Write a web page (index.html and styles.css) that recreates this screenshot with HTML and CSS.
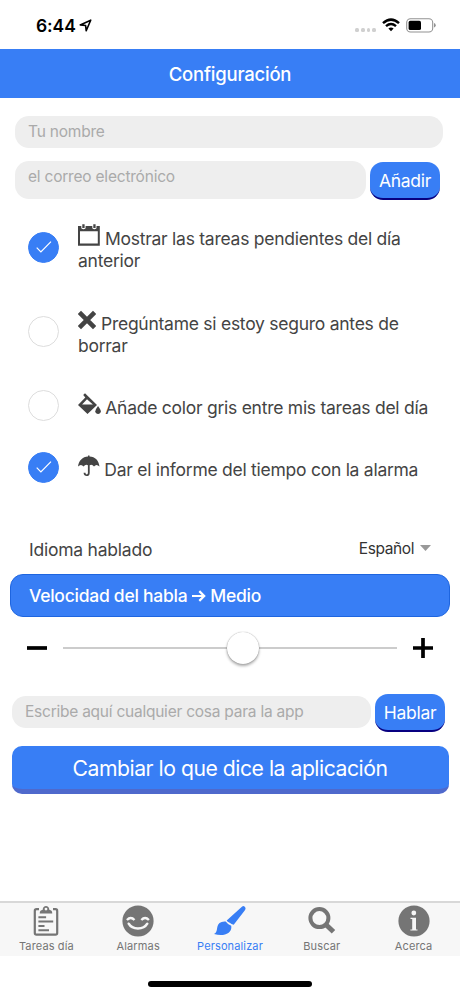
FILE: index.html
```html
<!DOCTYPE html>
<html lang="es">
<head>
<meta charset="utf-8">
<meta name="viewport" content="width=device-width, initial-scale=1">
<title>Configuración</title>
<link rel="stylesheet" href="styles.css">
</head>
<body>
<div class="status">
  <span class="time">6:44</span>
  <svg class="location" width="13" height="13" viewBox="0 0 13 13"><path d="M1.2 5.9 11.7 1.2 7.2 11.7 6.6 6.5Z" fill="none" stroke="#000" stroke-width="1.6" stroke-linejoin="round"/></svg>
  <span class="signal"><i></i><i></i><i></i><i></i></span>
  <svg class="wifi" width="18" height="14" viewBox="0 0 18 14"><g fill="none" stroke="#000" stroke-width="2.5"><path d="M1 5.1Q9-1.9 17 5.1"/><path d="M4 8.1Q9 3.9 14 8.1"/></g><path d="M6.4 10.5Q9 8.5 11.6 10.5L9 13.2Z"/></svg>
  <svg class="battery" width="30" height="15" viewBox="0 0 30 15"><rect x=".7" y=".7" width="26" height="13.3" rx="3.8" fill="#fff" stroke="#929292" stroke-width="1.1"/><rect x="2.6" y="2.7" width="12.4" height="9.4" rx="1.7"/><path d="M28 5v4.6Q29.7 9 29.7 7.3T28 5Z" fill="#929292"/></svg>
</div>
<header class="header"><h1>Configuración</h1></header>
<main class="content">
  <div class="field name">Tu nombre</div>
  <div class="field-row mail-row">
    <div class="field mail">el correo electrónico</div>
    <button class="button">Añadir</button>
  </div>
  <div class="options">
    <div class="option two-line">
      <span class="check checked"><svg width="18" height="14" viewBox="0 0 18 14"><path d="M1.7 7.7 5.9 12 16 1.6" fill="none" stroke="#fff" stroke-width="1.2"/></svg></span>
      <p class="label first"><svg class="icon" width="22" height="22" viewBox="0 0 22 22"><path fill="#444" fill-rule="evenodd" d="M0 2H3.3V4.2Q5.5 6.2 7.6 4.2V2H14.3V4.2Q16.4 6.2 18.5 4.2V2H21.8V21.7H0ZM2 7.2V19.6H19.8V7.2Z"/><path fill="#444" d="M4.3.3H6.6V4.1H4.3ZM15.3.3H17.6V4.1H15.3Z"/></svg><span>Mostrar las tareas pendientes del día</span><br><span>anterior</span></p>
    </div>
    <div class="option two-line">
      <span class="check"></span>
      <p class="label second"><svg class="icon" width="18" height="22" viewBox="0 0 18 22"><path d="M1.4 3.4 16.6 18.6M16.6 3.4 1.4 18.6" stroke="#444" stroke-width="4.6"/></svg><span>Pregúntame si estoy seguro antes de</span><br><span>borrar</span></p>
    </div>
    <div class="option one-line third-option">
      <span class="check"></span>
      <p class="label third"><svg class="icon" width="23" height="22" viewBox="0 0 23 22"><path fill="#444" fill-rule="evenodd" d="M5.2 2 7 .3 19 12 9.5 21 0 12 7.3 4.6ZM9 6.2 4.1 11.4H14.9Z"/><path fill="#444" d="M20 13Q17.3 16.6 17.3 18.3C17.3 21.9 22.8 21.9 22.8 18.3Q22.8 16.7 20 13Z"/></svg><span>Añade color gris entre mis tareas del día</span></p>
    </div>
    <div class="option one-line">
      <span class="check checked"><svg width="18" height="14" viewBox="0 0 18 14"><path d="M1.7 7.7 5.9 12 16 1.6" fill="none" stroke="#fff" stroke-width="1.2"/></svg></span>
      <p class="label fourth"><svg class="icon" width="22" height="22" viewBox="0 0 22 22"><path fill="#444" d="M10 1.4V.4H11.5V1.4C17.2 1.6 20.8 5.4 21.5 11.5Q18.4 8.5 16 11.5 14.1 9 11.7 10.2V17.9C11.7 22.1 5.6 22.2 5.6 17.8H7.5C7.5 20 9.9 20 9.9 17.8V10.2Q7.4 9 5.6 11.5 3 8.5 0 11.5C.7 5.6 4.6 1.6 10 1.4Z"/></svg><span>Dar el informe del tiempo con la alarma</span></p>
    </div>
  </div>
  <div class="language"><span>Idioma hablado</span><span class="selected">Español</span><i class="caret"></i></div>
  <div class="speed"><span>Velocidad del habla</span><svg width="14" height="14" viewBox="0 0 14 14"><path d="M0 7H12M7.3 2.1 12.2 7 7.3 11.9" fill="none" stroke="#fff" stroke-width="2.2"/></svg><span>Medio</span></div>
  <div class="slider">
    <svg width="20" height="20" viewBox="0 0 20 20"><path d="M0 10H20" stroke="#000" stroke-width="3.7"/></svg>
    <div class="track"><i class="knob"></i></div>
    <svg width="20" height="20" viewBox="0 0 20 20"><path d="M0 10H20M10 0V20" stroke="#000" stroke-width="3.7"/></svg>
  </div>
  <div class="field-row speak-row">
    <div class="field phrase">Escribe aquí cualquier cosa para la app</div>
    <button class="button speak">Hablar</button>
  </div>
  <button class="change">Cambiar lo que dice la aplicación</button>
</main>
<nav class="tabs">
  <a class="tab"><svg width="32" height="32" viewBox="0 0 32 32"><path d="M9 4.2H6.5Q4.8 4.2 4.8 5.9V28Q4.8 29.7 6.5 29.7H25.5Q27.2 29.7 27.2 28V5.9Q27.2 4.2 25.5 4.2H23" fill="none" stroke="#757575" stroke-width="2.2"/><path fill="#757575" fill-rule="evenodd" d="M9.8 8.6V7.8Q9.8 5.3 12.7 4.7C12.7-.2 19.3-.2 19.3 4.7Q22.2 5.3 22.2 7.8V8.6ZM14.6 4.1A1.4 1.4 0 1 0 17.4 4.1 1.4 1.4 0 1 0 14.6 4.1Z"/><path d="M8.4 12.2H16.1M8.4 16.5H23.2M8.4 21H14.5M8.4 25.2H19" stroke="#757575" stroke-width="2"/></svg><span>Tareas día</span></a>
  <a class="tab"><svg width="32" height="32" viewBox="0 0 32 32"><circle cx="16" cy="16" r="15.6" fill="#757575"/><path d="M4.9 15Q8.8 11 12.5 15M19.3 15Q23.1 11 26.9 15" fill="none" stroke="#f7f7f7" stroke-width="2.3"/><path d="M6.7 18.7C10.3 25.1 21.5 25.1 25.3 18.7" fill="none" stroke="#f7f7f7" stroke-width="2.5" stroke-linecap="round"/></svg><span>Alarmas</span></a>
  <a class="tab active"><svg width="32" height="32" viewBox="0 0 32 32"><path fill="#387ef5" d="M30.5 1.5Q32.4 3 30.9 5.2L19.7 19.8Q17.1 19.3 16.1 18.1 13.1 16.4 12.7 15.4L27.9 1.8Q29.3.6 30.5 1.5ZM11.7 16.6Q13.3 19.2 17.2 20.7C18.5 28.1 10.2 32 0 28.9 5.1 27.2.8 19.3 7.6 17.1Q9.8 16.1 11.7 16.6Z"/></svg><span>Personalizar</span></a>
  <a class="tab"><svg width="32" height="32" viewBox="0 0 32 32"><circle cx="13.4" cy="13.1" r="9" fill="none" stroke="#757575" stroke-width="4"/><path d="M19.5 19.3 27.5 26.8" stroke="#757575" stroke-width="5"/></svg><span>Buscar</span></a>
  <a class="tab"><svg width="32" height="32" viewBox="0 0 32 32"><circle cx="16" cy="16" r="15.6" fill="#757575"/><circle cx="15.8" cy="8" r="2.4" fill="#f7f7f7"/><path fill="#f7f7f7" d="M12.5 12.7H18V24.4H19.5V25.6H12.4V24.4H14.2V14H12.5Z"/></svg><span>Acerca</span></a>
</nav>
<div class="home"></div>
</body>
</html>
```
FILE: styles.css
```css
* { box-sizing: border-box; }
body { margin: 0; width: 460px; height: 996px; overflow: hidden; display: flex; flex-direction: column; background: #fff; color: #444; font: 17.5px/22px Inter, "Liberation Sans", sans-serif; }
h1, p { margin: 0; font: inherit; }
svg { display: block; flex: none; }
button { border: 0; padding: 0; font: inherit; color: #fff; background: #387ef5; white-space: nowrap; }
.status { height: 49px; display: flex; padding: 0 24px 0 36px; color: #000; }
.time { margin-top: 15px; width: 43px; font-size: 17.5px; font-weight: 600; letter-spacing: -.1px; }
.location { margin-top: 19px; }
.signal { display: flex; gap: 2px; margin: 28px 6px 0 auto; }
.signal i { width: 3.7px; height: 4px; border-radius: 1.5px; background: #d0d0d0; }
.wifi { margin: 18px 6px 0 0; }
.battery { margin-top: 18px; }
.header { height: 49px; background: #387ef5; color: #fff; text-align: center; padding-top: 14px; }
.header h1 { font-size: 18.5px; font-weight: 450; line-height: 22px; letter-spacing: -.22px; }
.content { height: 803px; flex: none; display: flex; flex-direction: column; }
.field { background: #eee; color: #aaa; font-size: 15.5px; letter-spacing: -.21px; white-space: nowrap; }
.name { width: 428px; height: 32px; margin: 18px 0 0 15px; padding: 5px 13px; border-radius: 14px; }
.field-row { display: flex; }
.mail-row { height: 39px; margin: 13px 0 0 15px; gap: 4px; }
.mail { width: 351px; height: 38px; padding: 5px 13px; border-radius: 14px; }
.button { width: 70px; height: 38px; margin-top: 1px; padding-top: 2px; border-radius: 13px; border-bottom: 2px solid #080080; font-size: 17.5px; letter-spacing: -.3px; }
.options { padding-left: 28px; margin-top: 24px; }
.option { display: flex; align-items: flex-start; gap: 19px; }
.two-line { height: 84.5px; }
.one-line { height: 62px; }
.check { width: 31px; height: 31px; margin-top: 7.5px; border: 1px solid #ddd; border-radius: 50%; display: flex; align-items: center; justify-content: center; flex: none; }
.checked { background: #387ef5; border-color: #387ef5; }
.label { margin-top: 3px; white-space: nowrap; letter-spacing: -.26px; }
.icon { display: inline-block; vertical-align: -1px; margin: -3px 5px 0 0; }
.third .icon, .fourth .icon { margin-right: 4.3px; }
.third-option { margin-top: -11px; }
.one-line .label { margin-top: 14px; }
.one-line .check { margin-top: 7.5px; }
.language { height: 49px; display: flex; padding: 13px 29px 0; margin-top: 20px; letter-spacing: -.23px; }
.selected { margin: -1px 6px 0 auto; font-size: 15.5px; letter-spacing: -.4px; color: #333; }
.caret { width: 11px; height: 6px; margin-top: 6px; background: #999; clip-path: polygon(0 0, 100% 0, 50% 100%); }
.speed { width: 440px; height: 43px; margin-left: 10px; margin-top: -1px; padding: 1px 0 0 18px; display: flex; align-items: center; color: #fff; background: #387ef5; border: 1px solid #1e65df; border-radius: 13px; font-weight: 450; letter-spacing: -.26px; }
.speed svg { margin: 0 4px 0 5px; }
.slider { height: 62px; display: flex; align-items: center; padding: 0 27px; gap: 16px; }
.track { flex: 1; height: 2px; background: #ccc; display: flex; align-items: center; }
.knob { width: 32px; height: 32px; margin-left: 164px; border-radius: 50%; background: #fff; box-shadow: 0 2px 3px #0005, 0 0 1px #0006; }
.speak-row { height: 39px; margin: 15px 0 0 12px; gap: 4px; }
.phrase { width: 359px; height: 32px; margin-top: 2px; padding: 5px 13px; border-radius: 14px; letter-spacing: -.24px; }
.speak { margin-top: 0; }
.change { width: 437px; height: 48px; margin: 13px 0 0 11.5px; border-radius: 10px; border-bottom: 5px solid #4f69cc; font-size: 21.2px; letter-spacing: -.48px; }
.tabs { height: 55px; flex: none; display: flex; border-top: 2px solid #d8d8d8; background: #f7f7f7; color: #757575; padding: 2px .5px 0; }
.tab { flex: 1; display: flex; flex-direction: column; align-items: center; font-size: 11px; line-height: 14px; letter-spacing: .13px; }
.tab span { margin-top: 2px; }
.active { color: #387ef5; }
.home { width: 164px; height: 6px; margin: 25px 0 0 148px; border-radius: 3px; background: #000; flex: none; }
```
